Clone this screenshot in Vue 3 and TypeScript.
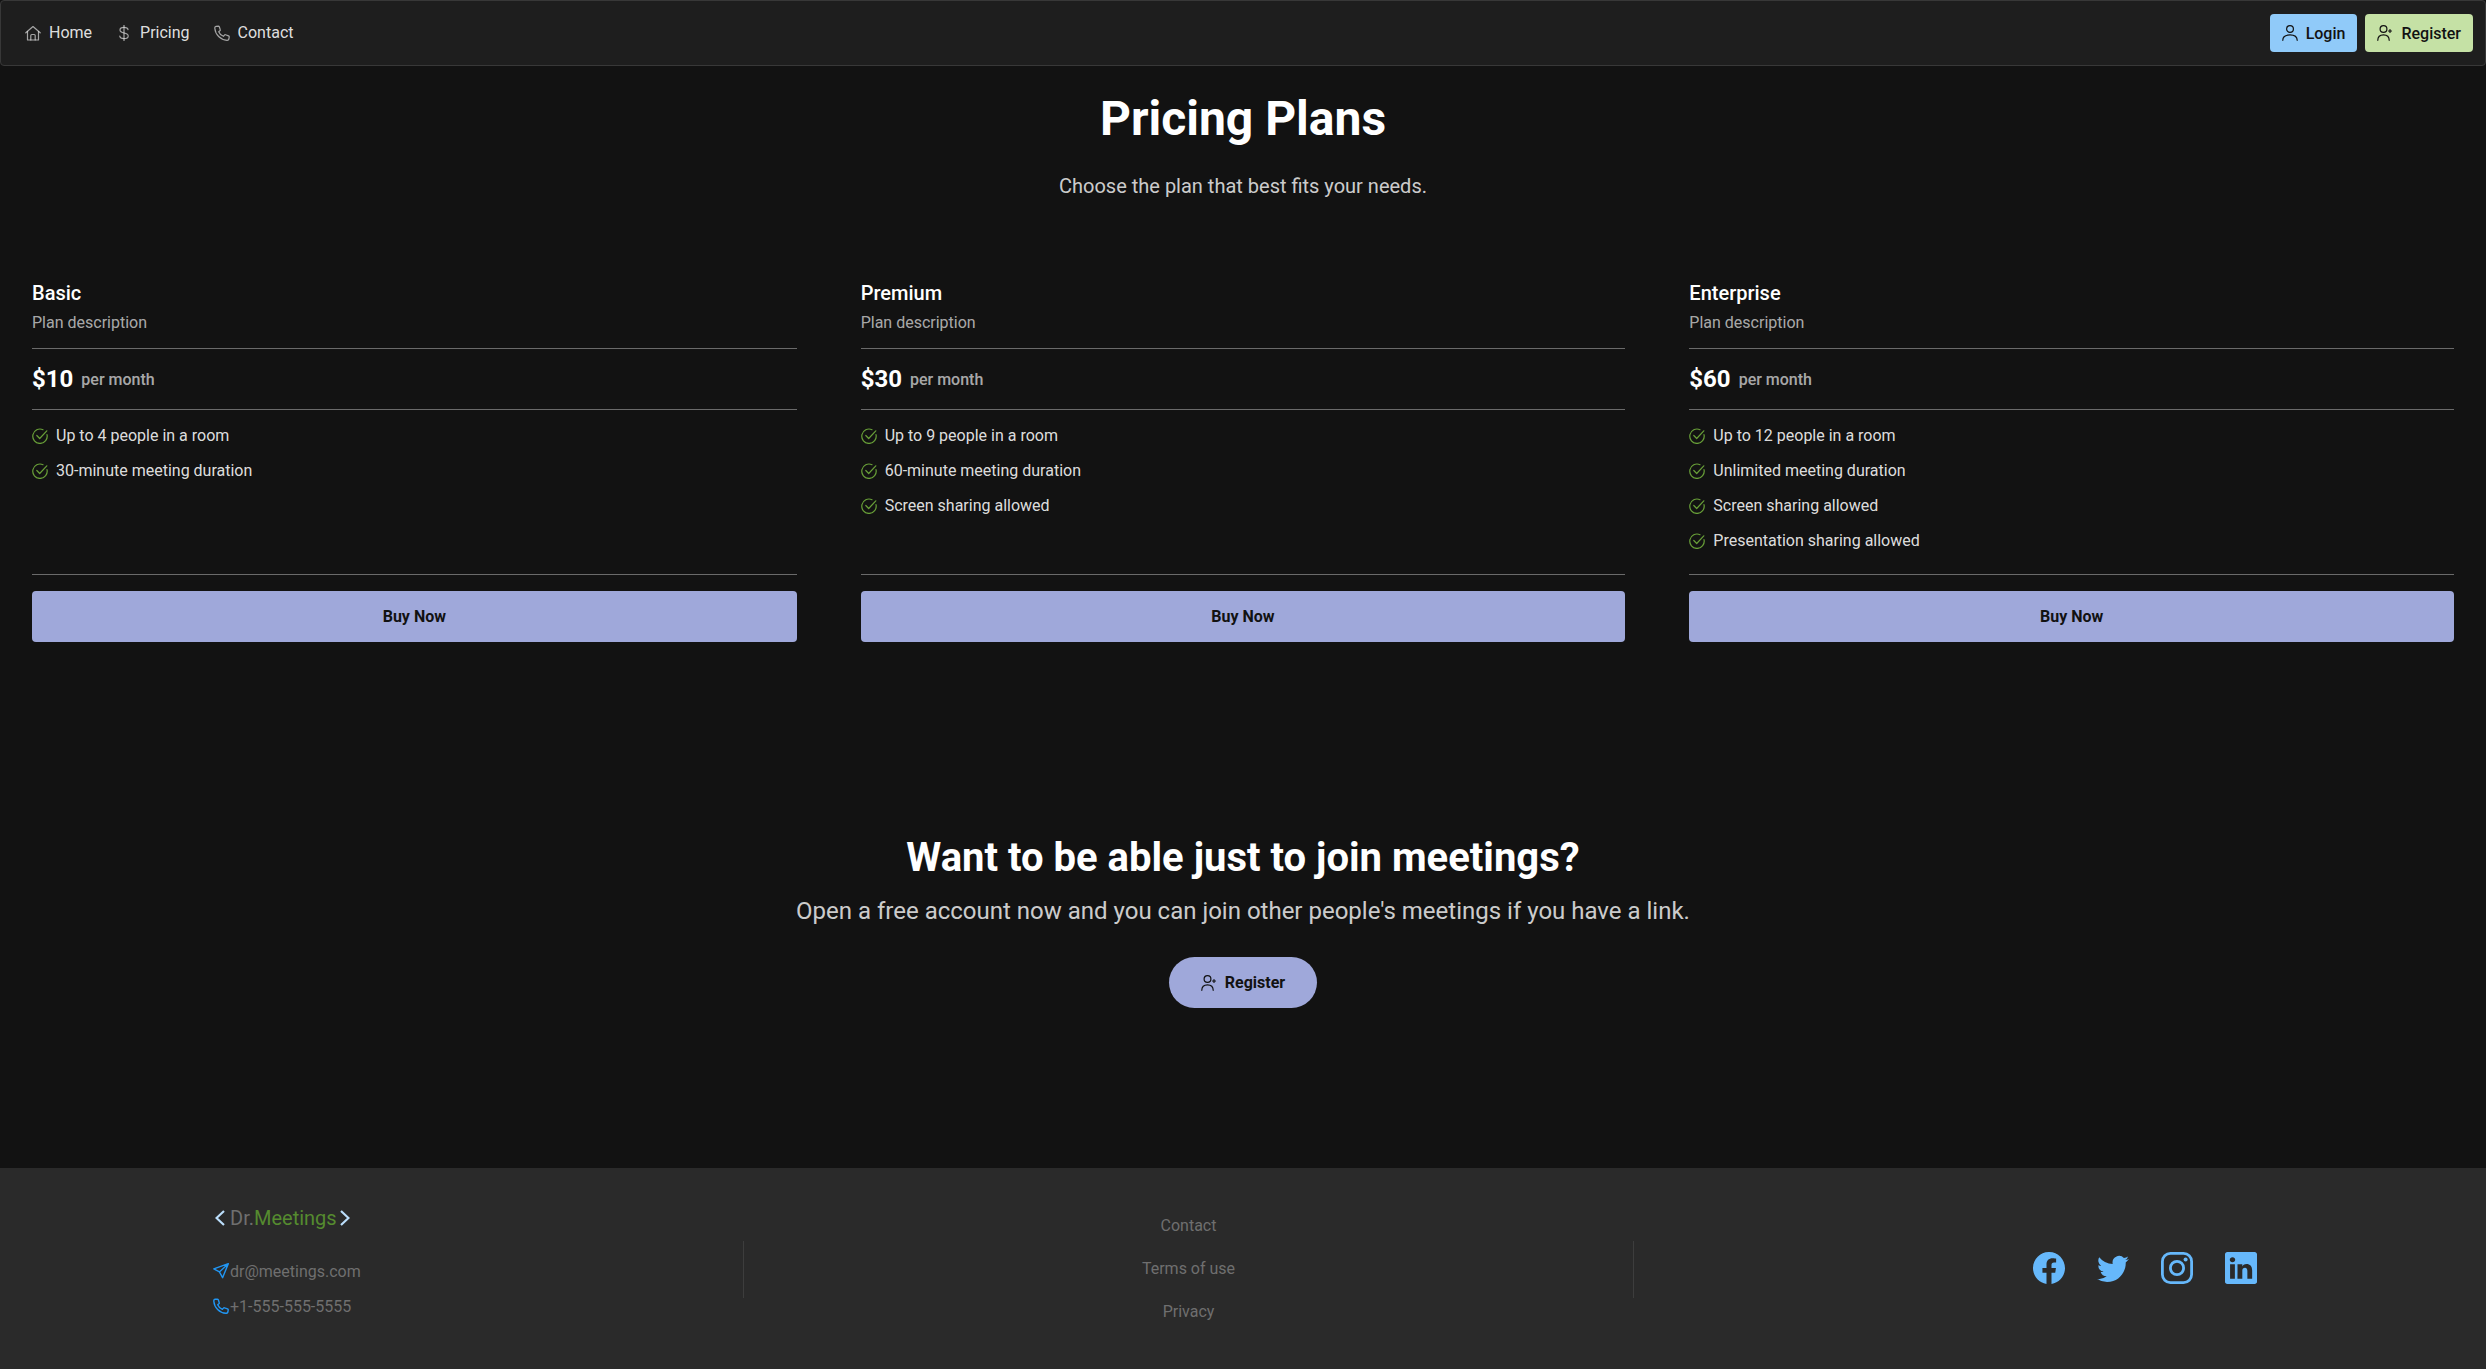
<template>
  <div class="page">
    <nav class="navbar">
      <div class="nav-links">
        <a v-for="link in navLinks" :key="link.label" class="nav-link">
          <svg class="icon nav-icon" viewBox="0 0 16 16" v-html="link.icon"></svg>
          <span>{{ link.label }}</span>
        </a>
      </div>
      <div class="nav-actions">
        <button class="nav-btn login">
          <svg class="icon" viewBox="0 0 16 16" v-html="userIcon"></svg>
          <span>Login</span>
        </button>
        <button class="nav-btn register">
          <svg class="icon" viewBox="0 0 16 16" v-html="userPlusIcon"></svg>
          <span>Register</span>
        </button>
      </div>
    </nav>

    <main class="content">
      <h1 class="title">Pricing Plans</h1>
      <p class="subtitle">Choose the plan that best fits your needs.</p>

      <section class="plans">
        <article v-for="plan in plans" :key="plan.name" class="plan">
          <div class="plan-name">{{ plan.name }}</div>
          <div class="plan-desc">Plan description</div>
          <hr />
          <div class="plan-price">
            <span class="amount">{{ plan.price }}</span>
            <span class="period">per month</span>
          </div>
          <hr class="tight" />
          <ul class="features">
            <li v-for="feature in plan.features" :key="feature">
              <svg class="icon check" viewBox="0 0 16 16" v-html="checkIcon"></svg>
              <span>{{ feature }}</span>
            </li>
          </ul>
          <hr />
          <button class="buy">Buy Now</button>
        </article>
      </section>

      <section class="cta">
        <h2>Want to be able just to join meetings?</h2>
        <p>Open a free account now and you can join other people's meetings if you have a link.</p>
        <button class="cta-btn">
          <svg class="icon" viewBox="0 0 16 16" v-html="userPlusIcon"></svg>
          <span>Register</span>
        </button>
      </section>
    </main>

    <footer class="footer">
      <div class="foot-left">
        <div class="logo">
          <svg class="chevron" viewBox="0 0 10 16"><path d="M9 1 1.500 8 9 15" /></svg>
          <span class="dr">Dr.</span><span class="meetings">Meetings</span>
          <svg class="chevron end" viewBox="0 0 10 16"><path d="M1 1l7.500 7L1 15" /></svg>
        </div>
        <div class="contact-row email">
          <svg class="icon blue" viewBox="0 0 16 16"><path d="M15.300.7.800 5.800l5.600 3.100 3.200 5.800L15.300.7ZM6.400 8.900 15.300.7" /></svg>
          <span>dr@meetings.com</span>
        </div>
        <div class="contact-row">
          <svg class="icon blue" viewBox="0 0 16 16" v-html="phoneIcon"></svg>
          <span>+1-555-555-5555</span>
        </div>
      </div>
      <div class="foot-mid">
        <a>Contact</a>
        <a>Terms of use</a>
        <a>Privacy</a>
      </div>
      <div class="foot-right">
        <svg class="social" viewBox="0 0 16 16"><path d="M16 8.049c0-4.446-3.582-8.05-8-8.05C3.58 0-.002 3.603-.002 8.05c0 4.017 2.926 7.347 6.750 7.951v-5.625h-2.030V8.050H6.750V6.275c0-2.017 1.195-3.131 3.022-3.131.876 0 1.791.157 1.791.157v1.980h-1.009c-.993 0-1.303.621-1.303 1.258v1.510h2.218l-.354 2.326H9.250V16c3.824-.604 6.750-3.934 6.750-7.951z" /></svg>
        <svg class="social" viewBox="0 0 16 16"><path d="M5.026 15c6.038 0 9.341-5.003 9.341-9.334 0-.14 0-.282-.006-.422A6.685 6.685 0 0 0 16 3.542a6.658 6.658 0 0 1-1.889.518 3.301 3.301 0 0 0 1.447-1.817 6.533 6.533 0 0 1-2.087.793A3.286 3.286 0 0 0 7.875 6.030a9.325 9.325 0 0 1-6.767-3.429 3.289 3.289 0 0 0 1.018 4.382A3.323 3.323 0 0 1 .64 6.575v.045a3.288 3.288 0 0 0 2.632 3.218 3.203 3.203 0 0 1-.865.115 3.230 3.230 0 0 1-.614-.057 3.283 3.283 0 0 0 3.067 2.277A6.588 6.588 0 0 1 .78 13.580a6.320 6.320 0 0 1-.78-.045A9.344 9.344 0 0 0 5.026 15z" /></svg>
        <svg class="social insta" viewBox="0 0 16 16">
          <rect x="0.700" y="0.700" width="14.600" height="14.600" rx="4" />
          <circle cx="8" cy="8" r="3.300" />
          <circle class="dot" cx="12.300" cy="3.700" r="1" />
        </svg>
        <svg class="social" viewBox="0 0 16 16"><path d="M0 1.146C0 .513.526 0 1.175 0h13.650C15.474 0 16 .513 16 1.146v13.708c0 .633-.526 1.146-1.175 1.146H1.175C.526 16 0 15.487 0 14.854V1.146zm4.943 12.248V6.169H2.542v7.225h2.401zm-1.200-8.212c.837 0 1.358-.554 1.358-1.248-.015-.709-.52-1.248-1.342-1.248-.822 0-1.359.54-1.359 1.248 0 .694.521 1.248 1.327 1.248h.016zm4.908 8.212V9.359c0-.216.016-.432.08-.586.173-.431.568-.878 1.232-.878.869 0 1.216.662 1.216 1.634v3.865h2.401V9.250c0-2.220-1.184-3.252-2.764-3.252-1.274 0-1.845.7-2.165 1.193v.025h-.016a5.540 5.540 0 0 1 .016-.025V6.169h-2.400c.03.678 0 7.225 0 7.225h2.400z" /></svg>
      </div>
    </footer>
  </div>
</template>

<script setup lang="ts">
interface Plan {
  name: string;
  price: string;
  features: string[];
}

const userIcon =
  '<circle cx="8" cy="4" r="3.400" /><path d="M.8 15.300c0-3.400 2.800-5.400 7.200-5.400s7.200 2 7.200 5.400" />';
const userPlusIcon =
  '<circle cx="6.500" cy="4" r="3.400" /><path d="M.8 15.300c0-3.400 2.200-5.400 5.700-5.400s5.700 2 5.700 5.400" /><path d="M13 4.500v3M11.500 6h3" />';
const phoneIcon =
  '<path d="M4.400 1.100 2 1.300C1.100 1.500.7 2.200.8 3.200 1.300 9.600 6.500 14.900 12.900 15.300c1 .1 1.800-.5 2-1.300l.3-1.900c.1-.5-.2-1-.7-1.200l-2.900-1.100c-.4-.2-.9-.1-1.200.3l-1 1.200C7.300 10.500 5.500 8.700 4.700 6.700l1.200-1c.4-.3.5-.8.3-1.200L5.300 1.700c-.2-.4-.5-.6-.9-.6Z" />';
const checkIcon = '<path d="M15 6.600A7.200 7.200 0 1 1 11 1.700" /><path d="M4.800 7.500 7.700 10.500 14.800 2.800" />';

const navLinks = [
  {
    label: "Home",
    icon: '<path d="M.8 7.800 8 1.500l7.200 6.300" /><path d="M2.500 6.500v8.500h11V6.500" /><path d="M5.800 15v-4.500c0-.6.4-1 1-1h2.400c.6 0 1 .4 1 1V15" />',
  },
  {
    label: "Pricing",
    icon: '<path d="M12 4.600C11.800 3 10.300 2.400 8 2.400 5.700 2.400 4 3.300 4 5.100c0 4.100 8.200 1.700 8.200 5.800 0 1.800-1.700 2.700-4.200 2.700-2.500 0-4-.8-4.200-2.500" /><path d="M8 0v16" />',
  },
  { label: "Contact", icon: phoneIcon },
];

const plans: Plan[] = [
  {
    name: "Basic",
    price: "$10",
    features: ["Up to 4 people in a room", "30-minute meeting duration"],
  },
  {
    name: "Premium",
    price: "$30",
    features: ["Up to 9 people in a room", "60-minute meeting duration", "Screen sharing allowed"],
  },
  {
    name: "Enterprise",
    price: "$60",
    features: [
      "Up to 12 people in a room",
      "Unlimited meeting duration",
      "Screen sharing allowed",
      "Presentation sharing allowed",
    ],
  },
];
</script>

<style>
html,
body {
  margin: 0;
  background: #121212;
}
</style>

<style scoped>
.page {
  display: flex;
  flex-direction: column;
  min-height: 100vh;
  background: #121212;
  color: #fff;
  font-family: Roboto, "Liberation Sans", sans-serif;
  font-size: 16px;
}

.icon {
  width: 16px;
  height: 16px;
  flex: none;
  fill: none;
  stroke: currentColor;
  stroke-width: 1.2;
  stroke-linecap: round;
  stroke-linejoin: round;
}

.navbar {
  display: flex;
  justify-content: space-between;
  align-items: center;
  box-sizing: border-box;
  height: 66px;
  padding: 0 12px 0 24px;
  background: #1e1e1e;
  border: 1px solid #383838;
  border-radius: 4px;
}

.nav-links {
  display: flex;
  gap: 24px;
  padding-bottom: 1px;
}

.nav-link {
  display: flex;
  align-items: center;
  gap: 8px;
  color: rgba(255, 255, 255, 0.87);
}

.nav-icon {
  color: rgba(255, 255, 255, 0.6);
}

.nav-actions {
  display: flex;
  gap: 8px;
}

.nav-btn {
  display: flex;
  align-items: center;
  gap: 8px;
  height: 38px;
  padding: 0 12px;
  border: none;
  border-radius: 4px;
  color: #121212;
  font: 500 16px Roboto, sans-serif;
}

.login {
  background: #90caf9;
}

.register {
  background: #c5e1a5;
}

.content {
  display: flex;
  flex-direction: column;
}

.title {
  margin: 24px 0 0;
  text-align: center;
  font-size: 48px;
  line-height: 58px;
  font-weight: 700;
}

.subtitle {
  margin: 26px 0 0;
  text-align: center;
  font-size: 20px;
  line-height: 24px;
  color: rgba(255, 255, 255, 0.8);
}

.plans {
  display: grid;
  grid-template-columns: repeat(3, 1fr);
  margin-top: 51px;
}

.plan {
  display: flex;
  flex-direction: column;
  padding: 32px 32px 0;
}

.plan-name {
  font-size: 20px;
  line-height: 24px;
  font-weight: 500;
}

.plan-desc {
  margin-top: 8px;
  line-height: 19px;
  color: rgba(255, 255, 255, 0.65);
}

hr {
  width: 100%;
  height: 1px;
  margin: 16px 0;
  border: none;
  background: #6a6a6a;
}

hr.tight {
  margin: 0 0 8px;
}

.plan-price {
  display: flex;
  align-items: center;
  gap: 8px;
  height: 60px;
  margin-top: -16px;
}

.amount {
  font-size: 24px;
  font-weight: 700;
}

.period {
  font-weight: 500;
  color: rgba(255, 255, 255, 0.65);
}

.features {
  flex: 1;
  margin: 0;
  padding: 0;
  list-style: none;
}

.features li {
  display: flex;
  align-items: center;
  gap: 8px;
  height: 35px;
  color: rgba(255, 255, 255, 0.87);
}

.check {
  color: #689f38;
}

.buy {
  height: 51px;
  border: none;
  border-radius: 4px;
  background: #9fa8da;
  color: #121212;
  font: 700 16px Roboto, sans-serif;
}

.cta {
  display: flex;
  flex-direction: column;
  align-items: center;
  margin-top: 192px;
}

.cta h2 {
  margin: 0;
  font-size: 40px;
  line-height: 48px;
  font-weight: 700;
}

.cta p {
  margin: 15px 0 0;
  font-size: 24px;
  line-height: 28px;
  color: rgba(255, 255, 255, 0.8);
}

.cta-btn {
  display: flex;
  align-items: center;
  gap: 8px;
  height: 51px;
  margin-top: 32px;
  padding: 0 32px;
  border: none;
  border-radius: 26px;
  background: #9fa8da;
  color: #121212;
  font: 700 16px Roboto, sans-serif;
}

.footer {
  display: grid;
  grid-template-columns: 528px 891px 1fr;
  box-sizing: border-box;
  height: 201px;
  margin-top: auto;
  padding: 0 229px 0 215px;
  background: #2a2a2a;
  color: #6f6f6f;
}

.foot-left {
  padding-top: 36px;
}

.logo {
  display: flex;
  align-items: center;
  gap: 5px;
  height: 28px;
  font-size: 20px;
}

.chevron {
  width: 10px;
  height: 16px;
  fill: none;
  stroke: #bbdefb;
  stroke-width: 2.2;
}

.chevron.end {
  margin-left: -2px;
}

.meetings {
  margin-left: -5px;
  color: #558b2f;
}

.contact-row {
  display: flex;
  align-items: center;
  height: 34px;
}

.email {
  margin-top: 22px;
  margin-bottom: 1px;
}

.blue {
  margin-left: -2px;
  margin-right: 1px;
  color: #2196f3;
  stroke-width: 1.4;
}

.foot-mid {
  display: flex;
  flex-direction: column;
  align-items: center;
  justify-content: center;
  gap: 24px;
  box-sizing: border-box;
  height: 57px;
  margin-top: 73px;
  padding-bottom: 3px;
  border-left: 1px solid #3d3d3d;
  border-right: 1px solid #3d3d3d;
}

.foot-right {
  display: flex;
  justify-content: flex-end;
  align-items: center;
  gap: 32px;
  padding-bottom: 2px;
}

.social {
  width: 32px;
  height: 32px;
  flex: none;
  fill: #66b8fb;
}

.insta {
  fill: none;
  stroke: #66b8fb;
  stroke-width: 1.4;
}

.insta .dot {
  fill: #66b8fb;
  stroke: none;
}
</style>
